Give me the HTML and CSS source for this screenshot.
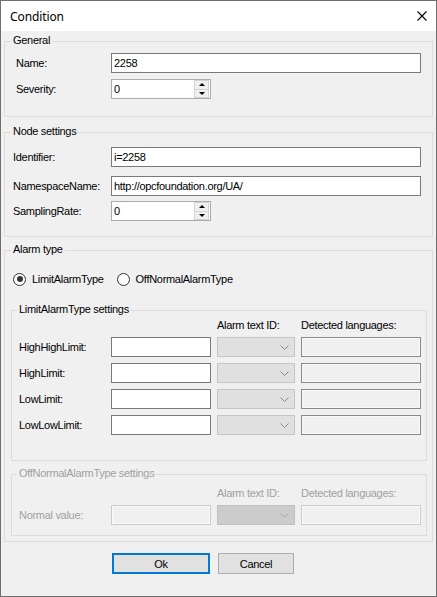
FILE: index.html
```html
<!DOCTYPE html>
<html>
<head>
<meta charset="utf-8">
<link rel="stylesheet" href="styles.css">
</head>
<body>
<div class="window">
  <div class="titlebar">
    <span class="title">Condition</span>
    <svg class="close" width="10" height="10" viewBox="0 0 10 10"><path d="M0.5 0.5 L9.5 9.5 M9.5 0.5 L0.5 9.5" stroke="#000" stroke-width="1.1" fill="none"/></svg>
  </div>
  <div class="client">
    <div class="group general">
      <span class="legend">General</span>
      <div class="row"><span class="lbl">Name:</span><div class="tb">2258</div></div>
      <div class="row gap6"><span class="lbl">Severity:</span>
        <div class="spin"><span class="spin-val">0</span><div class="spinbtns"><span class="sb"><i class="up"></i></span><span class="sb"><i class="down"></i></span></div></div>
      </div>
    </div>

    <div class="group node">
      <span class="legend">Node settings</span>
      <div class="row"><span class="lbl">Identifier:</span><div class="tb">i=2258</div></div>
      <div class="row gap9"><span class="lbl">NamespaceName:</span><div class="tb">http://opcfoundation.org/UA/</div></div>
      <div class="row gap5"><span class="lbl">SamplingRate:</span>
        <div class="spin"><span class="spin-val">0</span><div class="spinbtns"><span class="sb"><i class="up"></i></span><span class="sb"><i class="down"></i></span></div></div>
      </div>
    </div>

    <div class="group alarm">
      <span class="legend">Alarm type</span>
      <div class="radios">
        <span class="radio checked"></span><span class="rlabel">LimitAlarmType</span>
        <span class="radio second"></span><span class="rlabel">OffNormalAlarmType</span>
      </div>

      <div class="group inner limit">
        <span class="legend">LimitAlarmType settings</span>
        <div class="grid">
          <span></span><span></span><span class="hdr">Alarm text ID:</span><span class="hdr">Detected languages:</span>

          <span class="glbl">HighHighLimit:</span><div class="tb"></div>
          <div class="combo"><svg width="9" height="5" viewBox="0 0 9 5"><path d="M0.5 0.5 L4.5 4.5 L8.5 0.5" stroke="#8a8a8a" fill="none"/></svg></div><div class="det"></div>

          <span class="glbl">HighLimit:</span><div class="tb"></div>
          <div class="combo"><svg width="9" height="5" viewBox="0 0 9 5"><path d="M0.5 0.5 L4.5 4.5 L8.5 0.5" stroke="#8a8a8a" fill="none"/></svg></div><div class="det"></div>

          <span class="glbl">LowLimit:</span><div class="tb"></div>
          <div class="combo"><svg width="9" height="5" viewBox="0 0 9 5"><path d="M0.5 0.5 L4.5 4.5 L8.5 0.5" stroke="#8a8a8a" fill="none"/></svg></div><div class="det"></div>

          <span class="glbl">LowLowLimit:</span><div class="tb"></div>
          <div class="combo"><svg width="9" height="5" viewBox="0 0 9 5"><path d="M0.5 0.5 L4.5 4.5 L8.5 0.5" stroke="#8a8a8a" fill="none"/></svg></div><div class="det"></div>
        </div>
      </div>

      <div class="group inner offnormal">
        <span class="legend disabled">OffNormalAlarmType settings</span>
        <div class="grid grid-off">
          <span></span><span></span><span class="hdr disabled">Alarm text ID:</span><span class="hdr disabled">Detected languages:</span>
          <span class="glbl disabled">Normal value:</span><div class="tb tb-dis"></div>
          <div class="combo combo-dis"><svg width="9" height="5" viewBox="0 0 9 5"><path d="M0.5 0.5 L4.5 4.5 L8.5 0.5" stroke="#a8a8a8" fill="none"/></svg></div><div class="det det-dis"></div>
        </div>
      </div>
    </div>

    <div class="buttons">
      <div class="btn ok">Ok</div>
      <div class="btn cancel">Cancel</div>
    </div>
  </div>
</div>
</body>
</html>
```

FILE: styles.css
```css
html, body {
  margin: 0;
  padding: 0;
  background: #f0f0f0;
}
body {
  font-family: "Liberation Sans", Arial, sans-serif;
  font-size: 11px;
  letter-spacing: -0.3px;
  color: #000;
}
.window {
  width: 437px;
  height: 597px;
  box-sizing: border-box;
  border: 1px solid #6f6f6f;
  background: #f0f0f0;
  overflow: hidden;
}
.titlebar {
  height: 30px;
  background: #fff;
  display: flex;
  align-items: center;
  justify-content: space-between;
  padding: 0 9px 0 9px;
}
.title {
  font-family: "Noto Sans", "Liberation Sans", sans-serif;
  font-size: 12px;
  letter-spacing: -0.1px;
  margin-top: 1px;
}
.client {
  padding: 10px 3px 0 3px;
}
.group {
  position: relative;
  border: 1px solid #dcdcdc;
}
.legend {
  position: absolute;
  top: -8px;
  left: 6px;
  padding: 0 2px;
  line-height: 13px;
  background: #f0f0f0;
}
.inner .legend {
  left: 5px;
}
.disabled {
  color: #a0a0a0;
}
.row {
  display: flex;
  align-items: center;
  height: 20px;
}
.gap5 { margin-top: 5px; }
.gap6 { margin-top: 6px; }
.gap9 { margin-top: 9px; }
.lbl {
  width: 106px;
  flex: none;
  box-sizing: border-box;
}
.general {
  padding: 11px 11px 17px 0;
}
.general .lbl {
  padding-left: 11px;
}
.node {
  margin-top: 15px;
  padding: 14px 11px 15px 0;
}
.node .lbl {
  padding-left: 8px;
}
.tb {
  box-sizing: border-box;
  height: 20px;
  flex: 1;
  background: #fff;
  border: 1px solid #7a7a7a;
  padding: 0 2px;
  line-height: 18px;
  white-space: nowrap;
  overflow: hidden;
}
.spin {
  box-sizing: border-box;
  width: 100px;
  height: 20px;
  background: #fff;
  border: 1px solid #ababab;
  display: flex;
  align-items: stretch;
}
.spin-val {
  flex: 1;
  padding-left: 2px;
  line-height: 18px;
}
.spinbtns {
  width: 15px;
  display: flex;
  flex-direction: column;
  margin: 0 1px 0 0;
}
.sb {
  flex: 1;
  box-sizing: border-box;
  background: #f0f0f0;
  border: 1px solid #d4d4d4;
  display: flex;
  align-items: center;
  justify-content: center;
}
.sb + .sb {
  border-top: none;
}
.up {
  width: 0;
  height: 0;
  border-left: 3px solid transparent;
  border-right: 3px solid transparent;
  border-bottom: 3px solid #000;
}
.down {
  width: 0;
  height: 0;
  border-left: 3px solid transparent;
  border-right: 3px solid transparent;
  border-top: 3px solid #000;
}
.alarm {
  margin-top: 13px;
  padding: 20px 5px 5px 6px;
}
.radios {
  display: flex;
  align-items: center;
  height: 16px;
  padding-left: 2px;
}
.radio {
  box-sizing: border-box;
  width: 13px;
  height: 13px;
  border-radius: 50%;
  border: 1px solid #333;
  background: #fff;
  position: relative;
  flex: none;
}
.radio.checked::after {
  content: "";
  position: absolute;
  left: 2.5px;
  top: 2.5px;
  width: 6px;
  height: 6px;
  border-radius: 50%;
  background: #333;
}
.radio.second {
  margin-left: 13px;
}
.rlabel {
  margin-left: 6px;
}
.inner {
  margin-top: 23px;
}
.limit {
  padding: 9px 5px 25px 0;
}
.offnormal {
  margin-top: 13px;
  padding: 11px 5px 10px 0;
}
.grid {
  display: grid;
  grid-template-columns: 93px 100px 78px 120px;
  grid-template-rows: 11px repeat(4, 20px);
  column-gap: 6px;
  row-gap: 6px;
  align-items: center;
}
.grid-off {
  grid-template-rows: 14px 20px;
  row-gap: 5px;
}
.hdr {
  line-height: 14px;
}
.limit .hdr {
  line-height: 11px;
}
.glbl {
  padding-left: 7px;
}
.combo {
  box-sizing: border-box;
  height: 20px;
  background: #e0e0e0;
  border: 1px solid #c6c6c6;
  display: flex;
  align-items: center;
  justify-content: flex-end;
  padding-right: 5px;
}
.det {
  box-sizing: border-box;
  height: 20px;
  background: #f0f0f0;
  border: 1px solid #8a8a8a;
  box-shadow: inset 0 0 0 1px #f8f8f8;
}
.tb-dis {
  background: #f0f0f0;
  border-color: #cccccc;
  box-shadow: inset 0 0 0 1px #fafafa;
}
.combo-dis {
  background: #cccccc;
  border-color: #c0c0c0;
}
.det-dis {
  border-color: #cccccc;
  box-shadow: inset 0 0 0 1px #fafafa;
}
.buttons {
  display: flex;
  margin-top: 11px;
  padding-left: 108px;
  gap: 8px;
}
.btn {
  box-sizing: border-box;
  height: 21px;
  background: #e1e1e1;
  display: flex;
  align-items: center;
  justify-content: center;
}
.ok {
  width: 98px;
  border: 2px solid #0078d7;
}
.cancel {
  width: 76px;
  border: 1px solid #adadad;
}
```
